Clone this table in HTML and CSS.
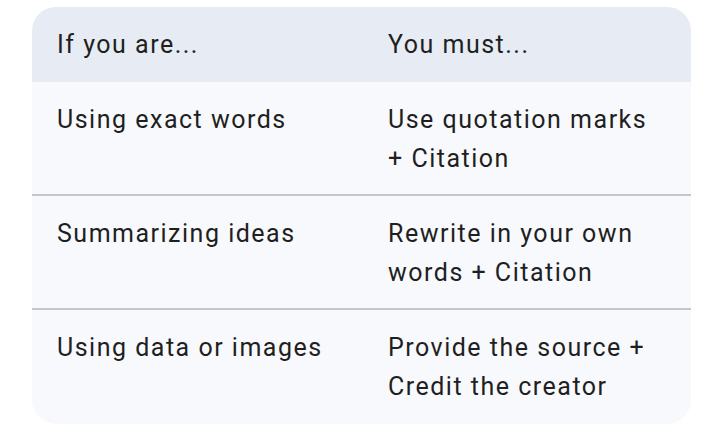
FILE: index.html
```html
<!DOCTYPE html>
<html lang="en">
<head>
<meta charset="utf-8">
<link rel="stylesheet" href="styles.css">
</head>
<body>
<div class="table">
  <div class="row head">
    <div class="cell">If you are...</div>
    <div class="cell">You must...</div>
  </div>
  <div class="row">
    <div class="cell">Using exact words</div>
    <div class="cell">Use quotation marks<br>+ Citation</div>
  </div>
  <div class="row">
    <div class="cell">Summarizing ideas</div>
    <div class="cell">Rewrite in your own<br>words + Citation</div>
  </div>
  <div class="row last">
    <div class="cell">Using data or images</div>
    <div class="cell">Provide the source +<br>Credit the creator</div>
  </div>
</div>
</body>
</html>
```
FILE: styles.css
```css
html, body {
  margin: 0;
  padding: 0;
  background: #ffffff;
}
body {
  padding: 7px 0 0 32px;
  font-family: Roboto, "Noto Sans", sans-serif;
  font-size: 25px;
  line-height: 39px;
  letter-spacing: 1.5px;
  color: #1f1f1f;
}
.table {
  width: 659px;
  border-radius: 24px;
  overflow: hidden;
  background: #f8f9fc;
}
.row {
  display: grid;
  grid-template-columns: 331px 1fr;
  box-sizing: border-box;
  height: 114px;
  border-bottom: 2px solid #c4c6c9;
}
.row.head {
  height: 75px;
  background: #e7ebf3;
  border-bottom: none;
}
.row.last {
  border-bottom: none;
}
.cell {
  padding: 18px 0 18px 25px;
}
```
